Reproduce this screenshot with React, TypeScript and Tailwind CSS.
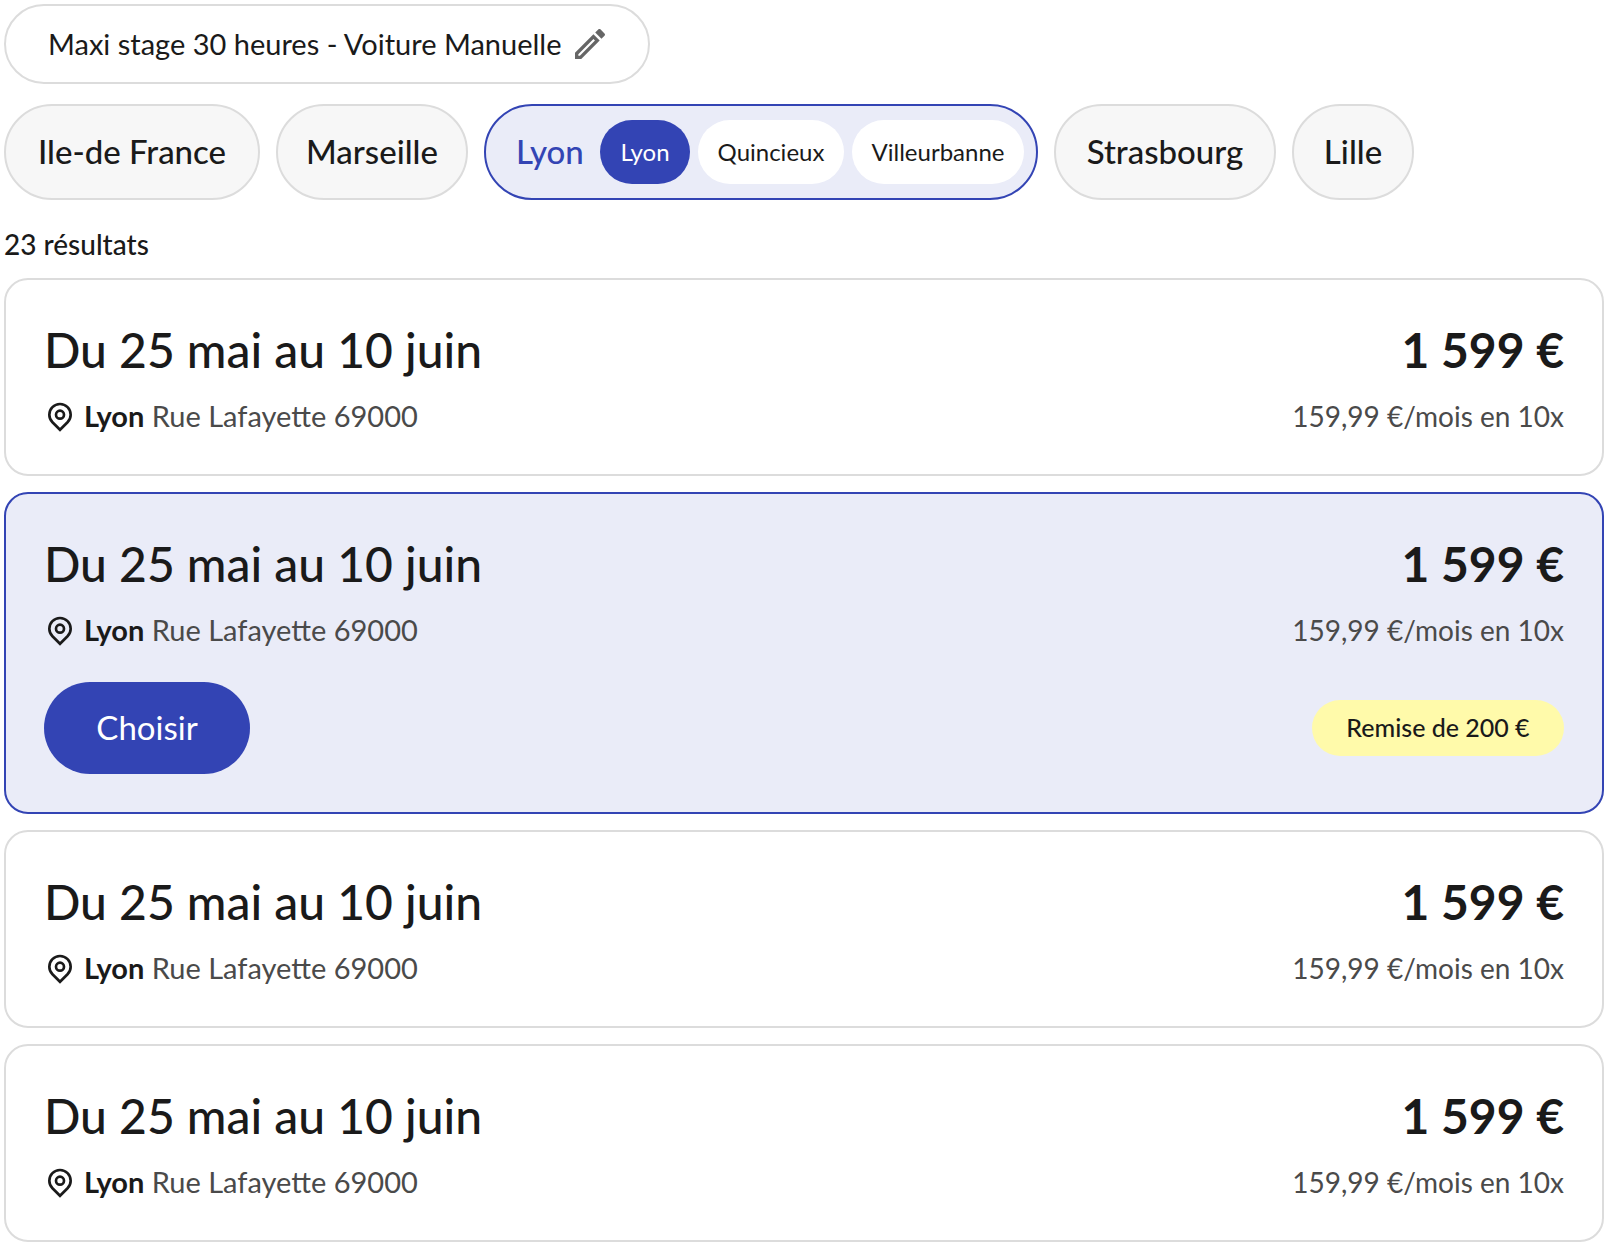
// Results page for driving-school courses: course selector, city filters
// and the list of available sessions.

import { useState } from "react";
import clsx from "clsx";
import { MdOutlineEdit } from "react-icons/md";

type Session = {
  id: number;
  dates: string;
  city: string;
  address: string;
  price: string;
  monthly: string;
  discount: string;
};

const SESSIONS: Session[] = [1, 2, 3, 4].map((id) => ({
  id,
  dates: "Du 25 mai au 10 juin",
  city: "Lyon",
  address: "Rue Lafayette 69000",
  price: "1 599 €",
  monthly: "159,99 €/mois en 10x",
  discount: "Remise de 200 €",
}));

const PLACES = [
  { name: "Lyon", width: "w-[90px]" },
  { name: "Quincieux", width: "w-[146px]" },
  { name: "Villeurbanne", width: "w-[172px]" },
];

export default function App() {
  const [place, setPlace] = useState("Lyon");
  const [selected, setSelected] = useState(2);

  return (
    <main className="bg-white pt-1 pr-px pb-3 pl-1 font-['Lato',sans-serif] text-[#1a1a1a]">
      <button
        type="button"
        className="flex h-20 w-[646px] items-center justify-between rounded-full border-2 border-[#dcdcdc] pr-[38px] pl-[42px] text-[29px]"
      >
        Maxi stage 30 heures - Voiture Manuelle
        <MdOutlineEdit className="size-10 text-[#666666]" />
      </button>

      <nav aria-label="Villes" className="mt-5 flex flex-wrap gap-4">
        <CityChip label="Ile-de France" width="w-64" />
        <CityChip label="Marseille" width="w-48" />
        <div className="flex h-24 items-center gap-2 rounded-full border-2 border-[#3344b4] bg-[#eaecf8] pr-3 pl-[30px]">
          <span className="mr-2 w-[68px] text-[33px] font-medium text-[#3344b4]">Lyon</span>
          {PLACES.map(({ name, width }) => (
            <button
              key={name}
              type="button"
              aria-pressed={place === name}
              onClick={() => setPlace(name)}
              className={clsx(
                "h-16 rounded-full text-2xl",
                width,
                place === name ? "bg-[#3344b4] text-white" : "bg-white",
              )}
            >
              {name}
            </button>
          ))}
        </div>
        <CityChip label="Strasbourg" width="w-[222px]" />
        <CityChip label="Lille" width="w-[122px]" />
      </nav>

      <p className="mt-6 text-[28px] leading-10 font-medium">23 résultats</p>

      <ul className="mt-[14px] flex flex-col gap-4">
        {SESSIONS.map((session) => (
          <SessionCard
            key={session.id}
            session={session}
            active={selected === session.id}
            onSelect={() => setSelected(session.id)}
          />
        ))}
      </ul>
    </main>
  );
}

function CityChip({ label, width }: { label: string; width: string }) {
  return (
    <button
      type="button"
      className={clsx(
        "h-24 rounded-full border-2 border-[#dcdcdc] bg-[#f7f7f7] text-[33px] font-medium",
        width,
      )}
    >
      {label}
    </button>
  );
}

function PinIcon() {
  return (
    <svg
      viewBox="0 0 24 24"
      fill="none"
      stroke="currentColor"
      strokeWidth={2}
      className="size-8 text-[#1a1a1a]"
      aria-hidden="true"
    >
      <path d="M6.343 16.657a8 8 0 1 1 11.314 0L12 22.314z" />
      <circle cx="12" cy="11" r="3" />
    </svg>
  );
}

function SessionCard({
  session,
  active,
  onSelect,
}: {
  session: Session;
  active: boolean;
  onSelect: () => void;
}) {
  return (
    <li
      onClick={onSelect}
      className={clsx(
        "rounded-3xl border-2 p-[38px]",
        active ? "border-[#3344b4] bg-[#eaecf8]" : "border-[#dcdcdc] bg-white",
      )}
    >
      <div className="flex items-center justify-between text-5xl leading-[64px]">
        <h2 className="font-medium">{session.dates}</h2>
        <p className="font-bold">{session.price}</p>
      </div>
      <div className="mt-[14px] flex items-center justify-between leading-10 text-[#4a4a4a]">
        <p className="flex items-center gap-2 text-[29px]">
          <PinIcon />
          <span>
            <strong className="font-bold text-[#1a1a1a]">{session.city}</strong> {session.address}
          </span>
        </p>
        <p className="text-[28px]">{session.monthly}</p>
      </div>

      {active && (
        <div className="mt-8 flex items-center justify-between">
          <button
            type="button"
            className="h-[92px] w-[206px] rounded-full bg-[#3344b4] text-[33px] text-white"
          >
            Choisir
          </button>
          <span className="flex h-14 w-[252px] items-center justify-center rounded-full bg-[#fffaaa] text-[25px] font-medium">
            {session.discount}
          </span>
        </div>
      )}
    </li>
  );
}
